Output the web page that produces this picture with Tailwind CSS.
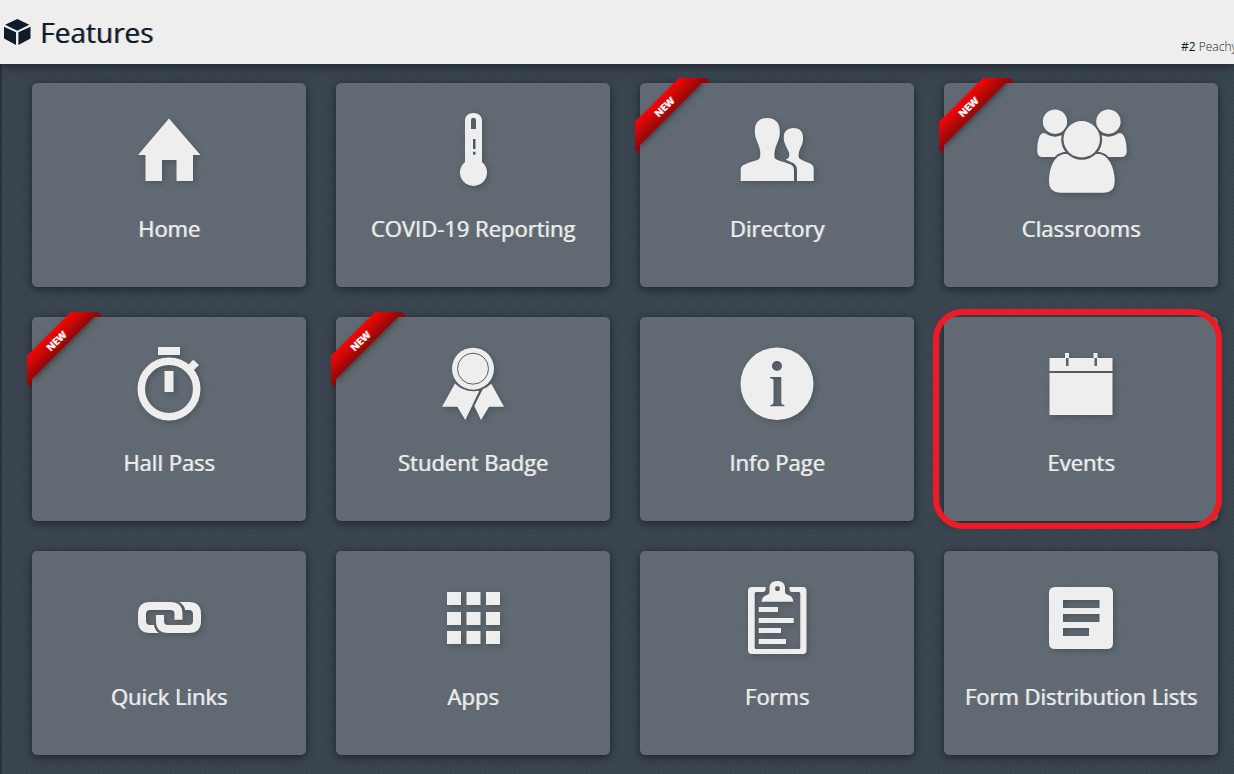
<!DOCTYPE html>
<html lang="en">
<head>
<meta charset="utf-8">
<meta name="viewport" content="width=device-width, initial-scale=1">
<title>Features</title>
<script src="https://cdn.jsdelivr.net/npm/@tailwindcss/browser@4"></script>
</head>
<body class="min-h-screen flex flex-col overflow-x-hidden bg-[#3b4651] font-['Open_Sans','Noto_Sans',sans-serif] text-[#eeeeee]">

<header class="relative z-10 flex h-16 shrink-0 items-center justify-between bg-[#eeeeee] pl-1 text-[#0f1b2b] shadow-[0_2px_10px_rgba(0,0,0,0.5)]">
  <h1 class="flex items-center gap-[9px] text-[28px] leading-10 font-medium [text-shadow:1px_0_0_rgb(15_27_43/0.5)]">
    <svg class="h-[26px] w-[27px]" viewBox="0 0 27 26" fill="currentColor" aria-hidden="true"><path d="M13.3 0 25.3 5.7 13.3 11.7 1 5.7ZM0 7.8 12 13.3V26L0 19.5ZM14.4 13.3 26.5 7.8V19.5L14.4 26Z"/></svg>
    Features
  </h1>
  <p class="w-[53px] self-end pb-[7px] text-xs leading-5 whitespace-nowrap">#2 <span class="font-light">Peachy</span></p>
</header>

<main class="flex-1 border-l-2 border-[#2a313b] bg-[repeating-linear-gradient(45deg,rgba(0,0,0,0.05)_0px,rgba(0,0,0,0.05)_1px,transparent_1px,transparent_3px)] pt-[19px] pr-4 pb-[18px] pl-[30px]">
  <nav aria-label="Features" class="grid grid-cols-4 gap-[30px] [text-shadow:1px_0_0_rgb(238_238_238/0.6)]">

    <a href="#home" class="relative flex h-[204px] flex-col items-center rounded-[5px] bg-white/20 pt-5 shadow-[0_2px_10px_rgba(0,0,0,0.5)]">
      <svg class="size-24 drop-shadow-[2px_2px_3px_rgba(0,0,0,0.2)]" viewBox="0 0 96 96" fill="currentColor" aria-hidden="true"><path d="M48 15.500 79.500 52H72V78H55.500V57H41V78H24.500V52H17Z"/></svg>
      <span class="mt-[13px] text-[22px] leading-8 font-medium">Home</span>
    </a>

    <a href="#covid" class="relative flex h-[204px] flex-col items-center rounded-[5px] bg-white/20 pt-5 shadow-[0_2px_10px_rgba(0,0,0,0.5)]">
      <svg class="size-24 drop-shadow-[2px_2px_3px_rgba(0,0,0,0.2)]" viewBox="0 0 96 96" fill="currentColor" aria-hidden="true"><path fill-rule="evenodd" d="M40 17.500C40 13 43.500 10 48.500 10S57 13 57 17.500V59A13.500 13.500 0 1 1 40 59ZM46 26H51V17Q51 14.700 48.500 14.700T46 17ZM48 36V46H50.500V36ZM48 48.700V51.700H50.500V48.700Z"/></svg>
      <span class="mt-[13px] text-[22px] leading-8 font-medium">COVID-19 Reporting</span>
    </a>

    <a href="#directory" class="relative flex h-[204px] flex-col items-center rounded-[5px] bg-white/20 pt-5 shadow-[0_2px_10px_rgba(0,0,0,0.5)]">
      <span class="absolute -top-[5px] -left-[5px] size-[75px] overflow-hidden">
        <span class="absolute top-[19px] -left-[21px] isolate block w-[100px] -rotate-45 bg-linear-to-b from-[#f70505] to-[#8f0808] text-center text-[10px] leading-5 font-bold text-white shadow-[0_3px_10px_-5px_black] before:absolute before:top-full before:left-0 before:-z-10 before:border-[3px] before:border-transparent before:border-t-[#8f0808] before:border-l-[#8f0808] after:absolute after:top-full after:right-0 after:-z-10 after:border-[3px] after:border-transparent after:border-t-[#8f0808] after:border-r-[#8f0808]">NEW</span>
      </span>
      <svg class="size-24 drop-shadow-[2px_2px_3px_rgba(0,0,0,0.2)]" viewBox="0 0 96 96" fill="currentColor" aria-hidden="true"><path d="M38.200 15C46 15 51 20 50.700 28C51.500 32 49.500 37 47.500 42C45.500 47 45 51 45.700 55.300C48 57.500 53 58.500 59 60.500C63 62 65 63 65 68V78H11.700V67C11.700 63 14 62 19 60C24 58 29 57.500 30.700 55.300C31.800 51 31.500 47 29.500 42C27 36 25.500 32 25.900 28C25.500 20 30 15 38.200 15Z"/><path d="M64.500 25C71 25 74.300 29 74 35C74.500 38 73 42 71 46C69.500 50 69.300 52 70 55C72 57 75 58 80 60C83.500 61.500 84.700 63 84.700 66V78H68V67C68 63 66 61 63 59.500L56.500 56.500C59 56 60.500 54.500 60.300 51C60 48 58 46 56.500 42C55 38.500 54.700 37 54.800 34C54.700 28.500 58.500 25 64.500 25Z"/></svg>
      <span class="mt-[13px] text-[22px] leading-8 font-medium">Directory</span>
    </a>

    <a href="#classrooms" class="relative flex h-[204px] flex-col items-center rounded-[5px] bg-white/20 pt-5 shadow-[0_2px_10px_rgba(0,0,0,0.5)]">
      <span class="absolute -top-[5px] -left-[5px] size-[75px] overflow-hidden">
        <span class="absolute top-[19px] -left-[21px] isolate block w-[100px] -rotate-45 bg-linear-to-b from-[#f70505] to-[#8f0808] text-center text-[10px] leading-5 font-bold text-white shadow-[0_3px_10px_-5px_black] before:absolute before:top-full before:left-0 before:-z-10 before:border-[3px] before:border-transparent before:border-t-[#8f0808] before:border-l-[#8f0808] after:absolute after:top-full after:right-0 after:-z-10 after:border-[3px] after:border-transparent after:border-t-[#8f0808] after:border-r-[#8f0808]">NEW</span>
      </span>
      <svg class="size-24 drop-shadow-[2px_2px_3px_rgba(0,0,0,0.2)]" viewBox="0 0 96 96" fill="currentColor" aria-hidden="true">
        <mask id="torso-cut" fill="#000"><path fill="#fff" d="M0 0H96V96H0Z"/><circle cx="22" cy="18.700" r="15"/><circle cx="75.400" cy="18.700" r="15"/><circle cx="48.700" cy="36.300" r="20.500"/><path stroke="#000" stroke-width="4" d="M31 51C20 53 16 67 16 78C16 86 20 89.700 28 89.700H70C78 89.700 81.700 86 81.700 78C81.700 67 77 53 66.500 51Z"/></mask>
        <mask id="body-cut" fill="#000"><path fill="#fff" d="M0 0H96V96H0Z"/><circle cx="48.700" cy="36.300" r="20.500"/></mask>
        <mask id="side-head-cut" fill="#000"><path fill="#fff" d="M0 0H96V96H0Z"/><circle cx="48.700" cy="36.300" r="20"/></mask>
        <g mask="url(#side-head-cut)"><circle cx="22" cy="18.700" r="12.200"/><circle cx="75.400" cy="18.700" r="12.200"/></g>
        <circle cx="48.700" cy="36.300" r="18.200"/>
        <path mask="url(#torso-cut)" d="M9.500 30.300H35V54H10.500C6 54 4.300 52 4.300 48C4.300 40 5.500 32 9.500 30.300ZM88 30.300H62V54H87.500C92 54 93.700 52 93.700 48C93.700 40 92 32 88 30.300Z"/>
        <path mask="url(#body-cut)" d="M31 51C20 53 16 67 16 78C16 86 20 89.700 28 89.700H70C78 89.700 81.700 86 81.700 78C81.700 67 77 53 66.500 51Z"/>
      </svg>
      <span class="mt-[13px] text-[22px] leading-8 font-medium">Classrooms</span>
    </a>

    <a href="#hall-pass" class="relative flex h-[204px] flex-col items-center rounded-[5px] bg-white/20 pt-5 shadow-[0_2px_10px_rgba(0,0,0,0.5)]">
      <span class="absolute -top-[5px] -left-[5px] size-[75px] overflow-hidden">
        <span class="absolute top-[19px] -left-[21px] isolate block w-[100px] -rotate-45 bg-linear-to-b from-[#f70505] to-[#8f0808] text-center text-[10px] leading-5 font-bold text-white shadow-[0_3px_10px_-5px_black] before:absolute before:top-full before:left-0 before:-z-10 before:border-[3px] before:border-transparent before:border-t-[#8f0808] before:border-l-[#8f0808] after:absolute after:top-full after:right-0 after:-z-10 after:border-[3px] after:border-transparent after:border-t-[#8f0808] after:border-r-[#8f0808]">NEW</span>
      </span>
      <svg class="size-24 drop-shadow-[2px_2px_3px_rgba(0,0,0,0.2)]" viewBox="0 0 96 96" fill="currentColor" aria-hidden="true"><path d="M37 10H59V18H37ZM43.500 34H52.500V55H43.500Z"/><circle cx="48" cy="52" r="27.700" fill="none" stroke="currentColor" stroke-width="7.500"/><path d="M66 29 72.300 22.700 78 28 71.500 34.500Z"/></svg>
      <span class="mt-[13px] text-[22px] leading-8 font-medium">Hall Pass</span>
    </a>

    <a href="#student-badge" class="relative flex h-[204px] flex-col items-center rounded-[5px] bg-white/20 pt-5 shadow-[0_2px_10px_rgba(0,0,0,0.5)]">
      <span class="absolute -top-[5px] -left-[5px] size-[75px] overflow-hidden">
        <span class="absolute top-[19px] -left-[21px] isolate block w-[100px] -rotate-45 bg-linear-to-b from-[#f70505] to-[#8f0808] text-center text-[10px] leading-5 font-bold text-white shadow-[0_3px_10px_-5px_black] before:absolute before:top-full before:left-0 before:-z-10 before:border-[3px] before:border-transparent before:border-t-[#8f0808] before:border-l-[#8f0808] after:absolute after:top-full after:right-0 after:-z-10 after:border-[3px] after:border-transparent after:border-t-[#8f0808] after:border-r-[#8f0808]">NEW</span>
      </span>
      <svg class="size-24 drop-shadow-[2px_2px_3px_rgba(0,0,0,0.2)]" viewBox="0 0 96 96" fill="currentColor" aria-hidden="true"><circle cx="48" cy="31.700" r="21"/><circle cx="48" cy="31.700" r="15.500" fill="none" stroke="#555e67" stroke-width="1"/><path d="M30 46.500Q39 56 54.300 53.700L40.300 83 32.300 69.700H17ZM57.700 52.300Q62 50.500 66.300 46.700L79 69.700H64L56 83 49.300 69Z"/></svg>
      <span class="mt-[13px] text-[22px] leading-8 font-medium">Student Badge</span>
    </a>

    <a href="#info" class="relative flex h-[204px] flex-col items-center rounded-[5px] bg-white/20 pt-5 shadow-[0_2px_10px_rgba(0,0,0,0.5)]">
      <svg class="size-24 drop-shadow-[2px_2px_3px_rgba(0,0,0,0.2)]" viewBox="0 0 96 96" fill="currentColor" aria-hidden="true"><path fill-rule="evenodd" d="M48 10.500A36.500 36.300 0 1 1 48 83.100A36.500 36.300 0 1 1 48 10.500ZM48 24A5 5 0 1 0 48 34A5 5 0 1 0 48 24ZM41 40V41.300Q44.500 41.300 44.500 44V65Q44.500 68 41.300 68V69.300H55.300V68Q52.300 68 52.300 65V40Z"/></svg>
      <span class="mt-[13px] text-[22px] leading-8 font-medium">Info Page</span>
    </a>

    <a href="#events" class="relative flex h-[204px] flex-col items-center rounded-[5px] bg-white/20 pt-5 shadow-[0_2px_10px_rgba(0,0,0,0.5)]">
      <svg class="size-24 drop-shadow-[2px_2px_3px_rgba(0,0,0,0.2)]" viewBox="0 0 96 96" fill="currentColor" aria-hidden="true"><path d="M16.500 36H79.500V78H16.500ZM16.500 21H32V16H36V21H60.500V16H64.500V21H79.500V34H16.500Z"/><path fill="#59616a" d="M33 21H35.500V29H33ZM61.500 21H64V29H61.500Z"/></svg>
      <span class="mt-[13px] text-[22px] leading-8 font-medium">Events</span>
      <span class="pointer-events-none absolute -top-2 -right-1 -bottom-2 -left-[11px] rounded-[30px] border-[6px] border-[#ed1c24]"></span>
    </a>

    <a href="#quick-links" class="relative flex h-[204px] flex-col items-center rounded-[5px] bg-white/20 pt-5 shadow-[0_2px_10px_rgba(0,0,0,0.5)]">
      <svg class="size-24 drop-shadow-[2px_2px_3px_rgba(0,0,0,0.2)]" viewBox="0 0 96 96" fill="currentColor" aria-hidden="true"><path fill="none" stroke="currentColor" stroke-width="8" d="M33 58H29Q21 58 21 50V43Q21 35 29 35H49Q57.500 35 57.500 43V48.700M39 44V50Q39 58 47 58H68Q76 58 76 50V43Q76 35 68 35H64"/><path d="M58.300 31H66V39H64Q63.500 34 58.300 31ZM38 62H31V54H33Q33.500 59 38 62Z"/></svg>
      <span class="mt-[13px] text-[22px] leading-8 font-medium">Quick Links</span>
    </a>

    <a href="#apps" class="relative flex h-[204px] flex-col items-center rounded-[5px] bg-white/20 pt-5 shadow-[0_2px_10px_rgba(0,0,0,0.5)]">
      <svg class="size-24 drop-shadow-[2px_2px_3px_rgba(0,0,0,0.2)]" viewBox="0 0 96 96" fill="currentColor" aria-hidden="true"><path d="M22 21h14v13H22zM41.500 21h14v13h-14zM61 21h14v13H61zM22 41h14v13H22zM41.500 41h14v13h-14zM61 41h14v13H61zM22 60h14v13H22zM41.500 60h14v13h-14zM61 60h14v13H61z"/></svg>
      <span class="mt-[13px] text-[22px] leading-8 font-medium">Apps</span>
    </a>

    <a href="#forms" class="relative flex h-[204px] flex-col items-center rounded-[5px] bg-white/20 pt-5 shadow-[0_2px_10px_rgba(0,0,0,0.5)]">
      <svg class="size-24 drop-shadow-[2px_2px_3px_rgba(0,0,0,0.2)]" viewBox="0 0 96 96" fill="currentColor" aria-hidden="true"><path d="M36.600 16V18Q36.600 21 34 21H27Q25.700 21 25.700 22.500V76.500Q25.700 78 27 78H70Q71.300 78 71.300 76.500V22.500Q71.300 21 70 21H63Q60.500 21 60.500 18V16H74Q77.500 16 77.500 20V79Q77.500 83 74 83H23Q19 83 19 79V20Q19 16 23 16ZM29.700 36H49V41H29.700ZM29.700 47H64.700V52H29.700ZM29.700 57H52V62H29.700ZM29.700 68H57V73H29.700Z"/><path fill-rule="evenodd" d="M32.700 30.700C33 26 36 24.500 39 23.500C41 22.500 40.500 20 40.500 17C40.500 12.500 43.500 10 48.300 10S56 12.500 56 17C56 20 55.500 22.500 58 23.500C61.500 24.500 64 26 64.300 30.700ZM48.500 15.300A2 2.400 0 1 0 48.500 20A2 2.400 0 1 0 48.500 15.300Z"/></svg>
      <span class="mt-[13px] text-[22px] leading-8 font-medium">Forms</span>
    </a>

    <a href="#form-lists" class="relative flex h-[204px] flex-col items-center rounded-[5px] bg-white/20 pt-5 shadow-[0_2px_10px_rgba(0,0,0,0.5)]">
      <svg class="size-24 drop-shadow-[2px_2px_3px_rgba(0,0,0,0.2)]" viewBox="0 0 96 96" fill="currentColor" aria-hidden="true"><path fill-rule="evenodd" d="M22 16H74Q80 16 80 22V72Q80 78 74 78H22Q16 78 16 72V22Q16 16 22 16ZM30 29V37H66.500V29ZM30 43V51H66.500V43ZM30 57V65H56V57Z"/></svg>
      <span class="mt-[13px] text-[22px] leading-8 font-medium">Form Distribution Lists</span>
    </a>
  </nav>
</main>
</body>
</html>
